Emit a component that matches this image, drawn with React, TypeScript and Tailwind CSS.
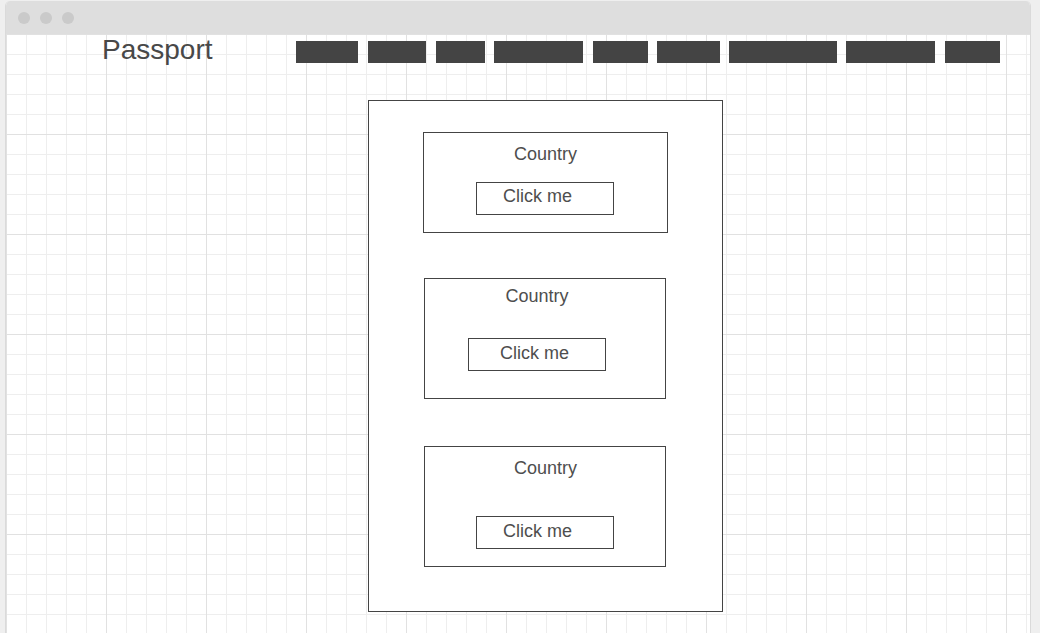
import React from 'react';

// nav placeholders: width + gap before each one
const navItems = [
  'w-[62px]',
  'ml-[10px] w-[58px]',
  'ml-[10px] w-[49px]',
  'ml-[9px] w-[89px]',
  'ml-[10px] w-[55px]',
  'ml-[9px] w-[63px]',
  'ml-[9px] w-[108px]',
  'ml-[9px] w-[89px]',
  'ml-[10px] w-[55px]',
];

function ClickMe({ className }: { className: string }) {
  return (
    <div className={`h-[33px] w-[138px] border border-[#444] text-[18px] leading-[24px] text-[#4e4e4e] ${className}`}>
      Click me
    </div>
  );
}

export default function App() {
  return (
    <div className="h-[633px] w-[1040px] overflow-hidden bg-[#efefef] pl-[5px] pt-[1px] font-['Liberation_Sans',Arial,sans-serif]">
      <div className="h-[700px] w-[1026px] overflow-hidden rounded-t-[5px] border-x border-[#dadada] bg-white">
        {/* window bar */}
        <div className="flex h-[33px] items-center gap-[10px] bg-[#dedede] pl-[12px]">
          <div className="h-[12px] w-[12px] rounded-full bg-[#cacaca]" />
          <div className="h-[12px] w-[12px] rounded-full bg-[#cacaca]" />
          <div className="h-[12px] w-[12px] rounded-full bg-[#cacaca]" />
        </div>

        {/* canvas */}
        <div className="h-[700px] [background-image:linear-gradient(to_right,#e1e1e1_1px,transparent_1px),linear-gradient(to_bottom,#e1e1e1_1px,transparent_1px),linear-gradient(to_right,#eeeeee_1px,transparent_1px),linear-gradient(to_bottom,#eeeeee_1px,transparent_1px)] [background-size:100px_100px,100px_100px,20px_20px,20px_20px]">
          {/* header */}
          <div className="flex h-[32px] items-start">
            <div className="ml-[96px] w-[194px] text-[28px] leading-[32px] text-[#484848]">Passport</div>
            <div className="mt-[7px] flex">
              {navItems.map((c, i) => (
                <div key={i} className={`h-[22px] bg-[#444] ${c}`} />
              ))}
            </div>
          </div>

          {/* panel */}
          <div className="ml-[362px] mt-[34px] flex h-[512px] w-[355px] flex-col border border-[#444] bg-white">
            <div className="ml-[54px] mt-[31px] h-[101px] w-[245px] border border-[#444] pt-[9px]">
              <div className="text-center text-[18px] leading-[24px] text-[#4e4e4e]">Country</div>
              <ClickMe className="ml-[52px] mt-[16px] pl-[26px] pt-[1px]" />
            </div>

            <div className="ml-[55px] mt-[45px] h-[121px] w-[242px] border border-[#444] pt-[5px]">
              <div className="pr-[16px] text-center text-[18px] leading-[24px] text-[#4e4e4e]">Country</div>
              <ClickMe className="ml-[43px] mt-[30px] pl-[31px] pt-[2px]" />
            </div>

            <div className="ml-[55px] mt-[47px] h-[121px] w-[242px] border border-[#444] pt-[9px]">
              <div className="pl-[1px] text-center text-[18px] leading-[24px] text-[#4e4e4e]">Country</div>
              <ClickMe className="ml-[51px] mt-[36px] pl-[26px] pt-[2px]" />
            </div>
          </div>
        </div>
      </div>
    </div>
  );
}
